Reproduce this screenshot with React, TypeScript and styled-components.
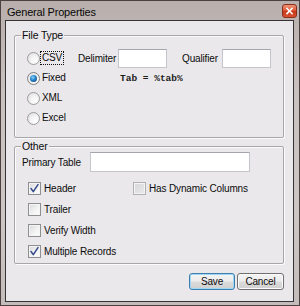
import React from 'react';
import styled, { createGlobalStyle, css } from 'styled-components';

const Global = createGlobalStyle`
  html, body { margin: 0; padding: 0; background: #c6bebb; }
  #root { width: 300px; height: 306px; }
  * { box-sizing: border-box; }
`;

const Window = styled.div`
  width: 300px;
  height: 306px;
  border: 1px solid #4a4140;
  background: linear-gradient(180deg, #b8afac 0%, #c9c1bf 30%, #cdc6c5 70%, #c4bcba 100%);
  display: flex;
  flex-direction: column;
  font-family: "Segoe UI", "Liberation Sans", Arial, sans-serif;
  color: #0c0c0c;
`;

const TitleBar = styled.div`
  height: 19px;
  flex: none;
  display: flex;
  align-items: flex-start;
  justify-content: space-between;
  padding: 0 2px 0 6px;
`;

const Title = styled.span`
  font-size: 11px;
  letter-spacing: -0.2px;
  line-height: 14px;
  margin-top: 4px;
  color: #080808;
`;

const CloseButton = styled.div`
  width: 15px;
  height: 14px;
  margin-top: 3px;
  border: 1px solid #8a2e1c;
  border-radius: 3px;
  background: linear-gradient(180deg, #ee9478 0%, #e2603f 40%, #c93a1c 55%, #d8502f 100%);
  display: flex;
  align-items: center;
  justify-content: center;
`;

const Client = styled.div`
  flex: 1;
  margin: 0 5px 3px 4px;
  border: 1px solid #343234;
  background: #eae8eb;
  display: flex;
  flex-direction: column;
  padding: 14px 9px 11px 8px;
  font-size: 10px;
  letter-spacing: -0.15px;
`;

const Group = styled.div<{ $height: number; $pad: string }>`
  position: relative;
  height: ${(p) => p.$height}px;
  border: 1px solid #a7a6a9;
  border-radius: 2px;
  box-shadow: inset 1px 1px 0 #fbfbfb, 1px 1px 0 #fbfbfb;
  padding: ${(p) => p.$pad};
  display: flex;
  flex-direction: column;
  & + & {
    margin-top: 8px;
  }
`;

const Caption = styled.span`
  position: absolute;
  top: -8px;
  left: 6px;
  padding: 0 1px;
  background: #eae8eb;
  font-size: 10.5px;
  line-height: 14px;
`;

const Row = styled.div<{ $h?: number }>`
  height: ${(p) => p.$h ?? 20}px;
  display: flex;
  align-items: center;
`;

const RadioCell = styled.label`
  width: 51px;
  flex: none;
  display: flex;
  align-items: center;
`;

const RadioDot = styled.span<{ $checked?: boolean }>`
  position: relative;
  width: 13px;
  height: 13px;
  flex: none;
  border-radius: 50%;
  border: 1px solid #9a9b9d;
  background: radial-gradient(circle at 65% 70%, #ffffff 0%, #f4f4f4 40%, #d9d9db 100%);
  ${(p) =>
    p.$checked &&
    css`
      border-color: #7f8184;
      &::after {
        content: '';
        position: absolute;
        left: 2px;
        top: 2px;
        width: 7px;
        height: 7px;
        border-radius: 50%;
        background: radial-gradient(circle at 40% 35%, #8fd3f7 0%, #2b8ad0 40%, #154d86 80%, #0e365f 100%);
      }
    `}
`;

const OptionText = styled.span<{ $focus?: boolean }>`
  border: 1px dotted ${(p) => (p.$focus ? '#111' : 'transparent')};
  padding: 0 1px;
  line-height: 12px;
`;

const FieldLabel = styled.span<{ $w: number; $ml?: number }>`
  width: ${(p) => p.$w}px;
  margin-left: ${(p) => p.$ml ?? 0}px;
  flex: none;
  white-space: nowrap;
`;

const TextBox = styled.div<{ $w: number; $h: number }>`
  width: ${(p) => p.$w}px;
  height: ${(p) => p.$h}px;
  flex: none;
  background: #ffffff;
  border: 1px solid #c4c6cc;
  border-top-color: #a3a6ad;
`;

const MonoNote = styled.span`
  margin-left: 42px;
  font-family: "Liberation Mono", "Courier New", monospace;
  font-size: 9.5px;
  font-weight: bold;
  letter-spacing: 0;
  color: #1c1c1c;
  white-space: pre;
`;

const CheckList = styled.div`
  margin-top: 6px;
  padding-left: 6px;
  display: flex;
  flex-direction: column;
  gap: 1px;
`;

const CheckCell = styled.label<{ $w?: number }>`
  width: ${(p) => (p.$w ? `${p.$w}px` : 'auto')};
  flex: none;
  display: flex;
  align-items: center;
  gap: 3px;
`;

const Box = styled.span<{ $disabled?: boolean }>`
  width: 13px;
  height: 13px;
  flex: none;
  border: 1px solid ${(p) => (p.$disabled ? '#b1b1b3' : '#8e8f91')};
  background: ${(p) =>
    p.$disabled
      ? 'linear-gradient(135deg, #d8d8da 0%, #e9e9ea 100%)'
      : 'linear-gradient(135deg, #d9d9db 0%, #f2f2f3 55%, #ffffff 100%)'};
  box-shadow: inset 0 0 0 1px #f4f4f5;
  display: flex;
  align-items: center;
  justify-content: center;
`;

const ButtonBar = styled.div`
  margin-top: 9px;
  display: flex;
  justify-content: flex-end;
  gap: 2px;
`;

const Button = styled.button<{ $w: number; $default?: boolean }>`
  width: ${(p) => p.$w}px;
  height: 17px;
  padding: 0;
  font-family: inherit;
  font-size: 10px;
  letter-spacing: inherit;
  color: #0c0c0c;
  border-radius: 3px;
  border: 1px solid ${(p) => (p.$default ? '#3c7fb1' : '#707070')};
  background: linear-gradient(180deg, #f4f4f4 0%, #ececec 48%, #dcdcdc 52%, #cfcfcf 100%);
  box-shadow: inset 0 0 0 1px ${(p) => (p.$default ? '#9fd6f2' : '#fbfbfb')};
  line-height: 14px;
`;

const Check = () => (
  <svg width="11" height="11" viewBox="0 0 11 11">
    <path d="M2 5.5 L4.3 8.6 L9 1.6" fill="none" stroke="#33488a" strokeWidth="1.5" strokeLinecap="round" strokeLinejoin="round" />
  </svg>
);

const Radio = ({ label, checked, focus }: { label: string; checked?: boolean; focus?: boolean }) => (
  <RadioCell>
    <RadioDot $checked={checked} />
    <OptionText $focus={focus}>{label}</OptionText>
  </RadioCell>
);

const CheckItem = ({ label, checked, disabled, w }: { label: string; checked?: boolean; disabled?: boolean; w?: number }) => (
  <CheckCell $w={w}>
    <Box $disabled={disabled}>{checked && <Check />}</Box>
    <span>{label}</span>
  </CheckCell>
);

export default function App() {
  return (
    <>
      <Global />
      <Window>
        <TitleBar>
          <Title>General Properties</Title>
          <CloseButton>
            <svg width="9" height="8" viewBox="0 0 9 8">
              <path d="M2 1.5 L7 6.5 M7 1.5 L2 6.5" stroke="#ffffff" strokeWidth="1.6" strokeLinecap="square" />
            </svg>
          </CloseButton>
        </TitleBar>
        <Client>
          <Group $height={103} $pad="12px 0 0 12px">
            <Caption>File Type</Caption>
            <Row>
              <Radio label="CSV" focus />
              <FieldLabel $w={40}>Delimiter</FieldLabel>
              <TextBox $w={49} $h={19} />
              <FieldLabel $w={40} $ml={15}>Qualifier</FieldLabel>
              <TextBox $w={49} $h={19} />
            </Row>
            <Row>
              <Radio label="Fixed" checked />
              <MonoNote>Tab = %tab%</MonoNote>
            </Row>
            <Row>
              <Radio label="XML" />
            </Row>
            <Row>
              <Radio label="Excel" />
            </Row>
          </Group>
          <Group $height={118} $pad="5px 0 0 7px">
            <Caption>Other</Caption>
            <Row>
              <FieldLabel $w={68}>Primary Table</FieldLabel>
              <TextBox $w={160} $h={20} />
            </Row>
            <CheckList>
              <Row>
                <CheckItem label="Header" checked w={105} />
                <CheckItem label="Has Dynamic Columns" disabled />
              </Row>
              <Row>
                <CheckItem label="Trailer" />
              </Row>
              <Row>
                <CheckItem label="Verify Width" />
              </Row>
              <Row>
                <CheckItem label="Multiple Records" checked />
              </Row>
            </CheckList>
          </Group>
          <ButtonBar>
            <Button $w={46} $default>Save</Button>
            <Button $w={47}>Cancel</Button>
          </ButtonBar>
        </Client>
      </Window>
    </>
  );
}
